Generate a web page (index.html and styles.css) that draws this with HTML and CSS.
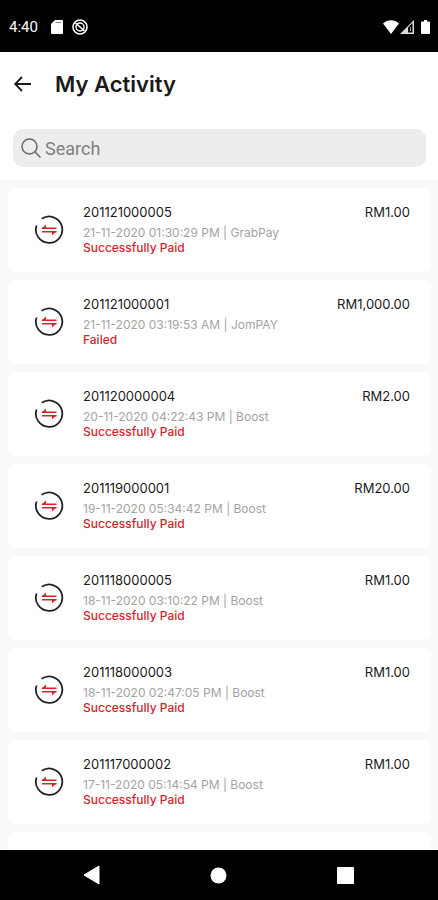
FILE: index.html
```html
<!DOCTYPE html>
<html lang="en">
<head>
  <meta charset="UTF-8" />
  <meta name="viewport" content="width=device-width, initial-scale=1.0"/>
  <title>My Activity</title>
  <link rel="stylesheet" href="styles.css">
</head>
<body>

<div class="status-bar">
  <span class="time">4:40</span>
  <svg class="sd-icon" width="12" height="14" viewBox="0 0 12 14"><path d="M4 0h7a1 1 0 0 1 1 1v12a1 1 0 0 1-1 1H1a1 1 0 0 1-1-1V4z" fill="#fff"/><path d="M4.5 2.5h5.5" stroke="#888" stroke-width="1"/></svg>
  <svg width="16" height="16" viewBox="0 0 16 16" fill="none" stroke="#fff"><circle cx="8" cy="8" r="7" stroke-width="1.6"/><circle cx="8" cy="8" r="4" stroke-width="1.4"/><path d="M3.500 4l9 8" stroke-width="1.6"/></svg>
  <div class="signals">
    <svg width="16" height="14" viewBox="0 0 16 14"><path d="M0 3.500C4.500-1 11.500-1 16 3.500L8 14z" fill="#fff"/></svg>
    <svg width="14" height="14" viewBox="0 0 14 14"><path d="M0 14L14 0v14z" fill="#ddd"/><path d="M8 7.500L12.500 3v9.500H8z" fill="#000"/><path d="M10.500 7v4" stroke="#999" stroke-width="1"/></svg>
    <svg class="battery" width="9" height="14" viewBox="0 0 9 14"><path d="M3 0h3v1.500h2a1 1 0 0 1 1 1V13a1 1 0 0 1-1 1H1a1 1 0 0 1-1-1V2.500a1 1 0 0 1 1-1h2z" fill="#fff"/></svg>
  </div>
</div>

<header>
  <div class="title-row">
    <button class="back" aria-label="Back">
      <svg width="17" height="16" viewBox="0 0 17 16" fill="none" stroke="#1a1a1a" stroke-width="1.8"><path d="M17 8H1.500M8 1L1.200 8L8 15"/></svg>
    </button>
    <h1>My Activity</h1>
  </div>
  <label class="search">
    <svg width="20" height="20" viewBox="0 0 20 20" fill="none" stroke="#666" stroke-width="1.5"><circle cx="8.500" cy="8.500" r="7.500"/><path d="M14 14l5.500 5.500"/></svg>
    <input type="text" placeholder="Search" aria-label="Search" />
  </label>
</header>

<svg class="defs" width="0" height="0">
  <symbol id="transfer" viewBox="0 0 30 30">
    <path d="M7.700 3.800A13.200 13.200 0 1 1 2.600 10.500" fill="none" stroke="#222" stroke-width="1.800"/>
    <path d="M8 13.200h14.500M8 16.800h14.500" stroke="#d3262b" stroke-width="1.500"/>
    <path d="M7.200 13.900L12 9.600v3.600zM22.800 16.100L18 20.400v-3.600z" fill="#d3262b"/>
  </symbol>
</svg>

<ul class="activity-list">
  <li>
    <svg class="icon"><use href="#transfer"/></svg>
    <div class="info">
      <div class="ref">201121000005</div>
      <div class="date">21-11-2020 01:30:29 PM | GrabPay</div>
      <div class="status">Successfully Paid</div>
    </div>
    <div class="amount">RM1.00</div>
  </li>
  <li>
    <svg class="icon"><use href="#transfer"/></svg>
    <div class="info">
      <div class="ref">201121000001</div>
      <div class="date">21-11-2020 03:19:53 AM | JomPAY</div>
      <div class="status">Failed</div>
    </div>
    <div class="amount">RM1,000.00</div>
  </li>
  <li>
    <svg class="icon"><use href="#transfer"/></svg>
    <div class="info">
      <div class="ref">201120000004</div>
      <div class="date">20-11-2020 04:22:43 PM | Boost</div>
      <div class="status">Successfully Paid</div>
    </div>
    <div class="amount">RM2.00</div>
  </li>
  <li>
    <svg class="icon"><use href="#transfer"/></svg>
    <div class="info">
      <div class="ref">201119000001</div>
      <div class="date">19-11-2020 05:34:42 PM | Boost</div>
      <div class="status">Successfully Paid</div>
    </div>
    <div class="amount">RM20.00</div>
  </li>
  <li>
    <svg class="icon"><use href="#transfer"/></svg>
    <div class="info">
      <div class="ref">201118000005</div>
      <div class="date">18-11-2020 03:10:22 PM | Boost</div>
      <div class="status">Successfully Paid</div>
    </div>
    <div class="amount">RM1.00</div>
  </li>
  <li>
    <svg class="icon"><use href="#transfer"/></svg>
    <div class="info">
      <div class="ref">201118000003</div>
      <div class="date">18-11-2020 02:47:05 PM | Boost</div>
      <div class="status">Successfully Paid</div>
    </div>
    <div class="amount">RM1.00</div>
  </li>
  <li>
    <svg class="icon"><use href="#transfer"/></svg>
    <div class="info">
      <div class="ref">201117000002</div>
      <div class="date">17-11-2020 05:14:54 PM | Boost</div>
      <div class="status">Successfully Paid</div>
    </div>
    <div class="amount">RM1.00</div>
  </li>
  <li></li>
</ul>

<nav class="nav-bar">
  <button aria-label="Back"><svg width="17" height="20" viewBox="0 0 17 20"><path d="M16 1v18L1 10z" fill="#fff" stroke="#fff" stroke-linejoin="round"/></svg></button>
  <button aria-label="Home"><svg width="17" height="17" viewBox="0 0 17 17"><circle cx="8.500" cy="8.500" r="8" fill="#fff"/></svg></button>
  <button aria-label="Recent apps"><svg width="17" height="17" viewBox="0 0 17 17"><rect width="17" height="17" rx="1" fill="#fff"/></svg></button>
</nav>

</body>
</html>
```
FILE: styles.css
```css
* {
  box-sizing: border-box;
}

body {
  font-family: Inter, Roboto, sans-serif;
  margin: 0;
  height: 100vh;
  display: flex;
  flex-direction: column;
  background: #f9f9f9;
  color: #1a1a1a;
}

svg {
  display: block;
  flex-shrink: 0;
}

button {
  border: none;
  background: none;
  padding: 0;
  cursor: pointer;
}

.status-bar {
  display: flex;
  align-items: center;
  flex-shrink: 0;
  height: 52px;
  padding: 2px 8px 0 9px;
  background: #000;
  color: #fff;
}

.time {
  font-family: Roboto, sans-serif;
  font-size: 15px;
}

.sd-icon {
  margin: 0 9px 0 13px;
}

.signals {
  display: flex;
  align-items: center;
  gap: 1px;
  margin-left: auto;
}

.battery {
  margin-left: 6px;
}

header {
  flex-shrink: 0;
  padding: 17px 12px 13px 13px;
  background: #fff;
}

.title-row {
  display: flex;
  align-items: center;
  gap: 24px;
  height: 30px;
  padding-left: 1px;
  margin-bottom: 30px;
}

h1 {
  margin: 0;
  font-size: 22px;
  font-weight: 600;
  line-height: 30px;
}

.search {
  display: flex;
  align-items: center;
  gap: 4px;
  height: 38px;
  padding: 0 8px;
  border-radius: 10px;
  background: #ededed;
}

.search input {
  flex: 1;
  min-width: 0;
  padding: 0;
  border: none;
  outline: none;
  background: none;
  font-family: Roboto, sans-serif;
  font-size: 18px;
  color: #333;
}

.search input::placeholder {
  color: #808080;
  opacity: 1;
}

.defs {
  position: absolute;
}

.activity-list {
  flex: 1;
  min-height: 0;
  overflow: hidden;
  margin: 0;
  padding: 8px 7px 0 8px;
  list-style: none;
}

li {
  display: flex;
  min-height: 84px;
  margin-bottom: 8px;
  padding: 16px 21px 16px 26px;
  border-radius: 8px;
  background: #fff;
}

.icon {
  width: 30px;
  height: 30px;
  margin: 11px 19px 0 0;
}

.info {
  flex: 1;
  font-size: 12px;
  line-height: 15px;
}

.ref,
.amount {
  font-size: 13px;
  line-height: 16px;
}

.ref {
  margin-bottom: 5px;
}

.date {
  color: #a3a3a3;
}

.status {
  font-weight: 500;
  color: #d3262b;
}

.nav-bar {
  display: flex;
  align-items: center;
  justify-content: space-between;
  flex-shrink: 0;
  height: 50px;
  padding: 0 84px 0 83px;
  background: #000;
}
```
